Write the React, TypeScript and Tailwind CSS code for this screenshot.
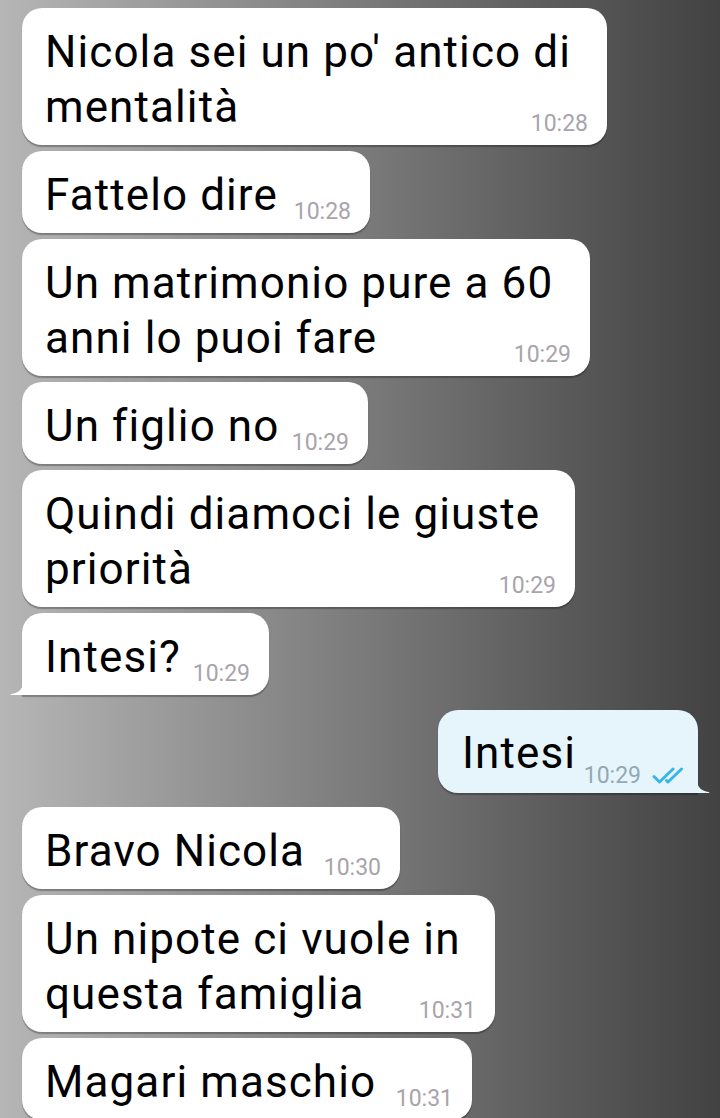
import React from "react";

type Msg = { lines: string[]; time: string; w: string; tail?: boolean; mt: string };

const incoming1: Msg[] = [
  { lines: ["Nicola sei un po' antico di", "mentalità"], time: "10:28", w: "w-[585px]", mt: "mt-[8px]" },
  { lines: ["Fattelo dire"], time: "10:28", w: "w-[348px]", mt: "mt-[6px]" },
  { lines: ["Un matrimonio pure a 60", "anni lo puoi fare"], time: "10:29", w: "w-[568px]", mt: "mt-[6px]" },
  { lines: ["Un figlio no"], time: "10:29", w: "w-[346px]", mt: "mt-[6px]" },
  { lines: ["Quindi diamoci le giuste", "priorità"], time: "10:29", w: "w-[553px]", mt: "mt-[6px]" },
  { lines: ["Intesi?"], time: "10:29", w: "w-[247px]", tail: true, mt: "mt-[6px]" },
];

const incoming2: Msg[] = [
  { lines: ["Bravo Nicola"], time: "10:30", w: "w-[378px]", mt: "mt-[14px]" },
  { lines: ["Un nipote ci vuole in", "questa famiglia"], time: "10:31", w: "w-[473px]", mt: "mt-[6px]" },
  { lines: ["Magari maschio"], time: "10:31", w: "w-[450px]", mt: "mt-[6px]" },
];

function Incoming({ m }: { m: Msg }) {
  const last = m.lines[m.lines.length - 1];
  return (
    <div
      className={`relative ${m.w} ${m.mt} ml-[22px] bg-white ${
        m.tail ? "rounded-[20px] rounded-bl-none" : "rounded-[20px]"
      } pl-[23px] pr-[19px] pt-[17px] pb-[10px] shadow-[0_1.5px_1px_rgba(0,0,0,0.28)]`}
    >
      {m.lines.slice(0, -1).map((l) => (
        <div key={l} className="whitespace-nowrap">
          {l}
        </div>
      ))}
      <div className="flex items-end justify-between">
        <span className="whitespace-nowrap">{last}</span>
        <span className="text-[23px] leading-none tracking-normal text-[#a9a4ab]">{m.time}</span>
      </div>
      {m.tail && (
        <svg
          className="absolute -left-[12px] bottom-0"
          width="13"
          height="20"
          viewBox="0 0 13 20"
        >
          <path d="M13 0 V8 C13 14 8 18 1.5 19 C0.5 19.2 0.3 20 1 20 H13 Z" fill="#ffffff" />
        </svg>
      )}
    </div>
  );
}

function Outgoing() {
  return (
    <div className="relative self-end mr-[22px] mt-[15px] w-[260px] bg-[#e6f5fc] rounded-[20px] rounded-br-none pl-[24px] pr-[10px] pt-[16px] pb-[12px] shadow-[0_1.5px_1px_rgba(0,0,0,0.28)]">
      <div className="flex items-end justify-between">
        <span className="whitespace-nowrap">Intesi</span>
        <span className="flex items-end gap-[11px] -mb-[6px]">
          <span className="text-[23px] leading-none tracking-normal text-[#93a9b4]">10:29</span>
          <svg width="36" height="17" viewBox="0 0 36 17" className="mb-[3px]">
            <path
              d="M2 9.5 L7.5 15 L21 2"
              fill="none"
              stroke="#3cb4e8"
              strokeWidth="3"
              strokeLinecap="round"
              strokeLinejoin="round"
            />
            <path
              d="M14.5 13.5 L16 15 L29.5 2"
              fill="none"
              stroke="#3cb4e8"
              strokeWidth="3"
              strokeLinecap="round"
              strokeLinejoin="round"
            />
          </svg>
        </span>
      </div>
      <svg className="absolute -right-[12px] bottom-0" width="13" height="20" viewBox="0 0 13 20">
        <path d="M0 0 V8 C0 14 5 18 11.5 19 C12.5 19.2 12.7 20 12 20 H0 Z" fill="#e6f5fc" />
      </svg>
    </div>
  );
}

export default function App() {
  return (
    <div
      className="h-[1118px] w-full overflow-hidden bg-linear-to-r from-[#b6b6b6] via-[#7b7b7b] to-[#424242] flex flex-col items-start text-[44px] leading-[55px] tracking-[0.025em] text-black"
      style={{ fontFamily: "Roboto, 'Noto Sans', sans-serif" }}
    >
      {incoming1.map((m, i) => (
        <Incoming key={"a" + i} m={m} />
      ))}
      <Outgoing />
      {incoming2.map((m, i) => (
        <Incoming key={"b" + i} m={m} />
      ))}
    </div>
  );
}
